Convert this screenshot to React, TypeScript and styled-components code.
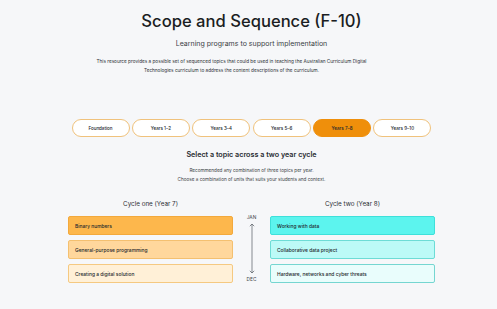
import styled, { createGlobalStyle } from "styled-components";

const GlobalStyle = createGlobalStyle`
  html, body {
    margin: 0;
    padding: 0;
    background: #f6f7f9;
    font-family: Inter, "Noto Sans", sans-serif;
    color: #1b1e23;
  }
`;

const years = ["Foundation", "Years 1–2", "Years 3–4", "Years 5–6", "Years 7–8", "Years 9–10"];

const cycleOne = ["Binary numbers", "General-purpose programming", "Creating a digital solution"];
const cycleTwo = ["Working with data", "Collaborative data project", "Hardware, networks and cyber threats"];

const orange = [
  { bg: "#fdb74c", border: "#f3a93c" },
  { bg: "#ffd79c", border: "#f4c070" },
  { bg: "#fff0d7", border: "#f5c981" },
];

const cyan = [
  { bg: "#5cf4ee", border: "#3ee0da" },
  { bg: "#bcfaf7", border: "#6ddcd6" },
  { bg: "#e9fdfc", border: "#75d6d1" },
];

const App = () => {
  return (
    <>
      <GlobalStyle />
      <Page>
        <Title>Scope and Sequence (F-10)</Title>
        <Subtitle>Learning programs to support implementation</Subtitle>
        <Intro>
          This resource provides a possible set of sequenced topics that could be used in teaching the Australian
          Curriculum Digital Technologies curriculum to address the content descriptions of the curriculum.
        </Intro>

        <Tabs>
          {years.map((y) => (
            <Tab key={y} $active={y === "Years 7–8"}>
              {y}
            </Tab>
          ))}
        </Tabs>

        <Heading>Select a topic across a two year cycle</Heading>
        <Note>
          Recommended any combination of three topics per year.
          <br />
          Choose a combination of units that suits your students and context.
        </Note>

        <Cycles>
          <Column>
            <CycleTitle>Cycle one (Year 7)</CycleTitle>
            {cycleOne.map((t, i) => (
              <Card key={t} $bg={orange[i].bg} $border={orange[i].border}>
                {t}
              </Card>
            ))}
          </Column>

          <Timeline>
            <Month>JAN</Month>
            <svg width="8" height="51" viewBox="0 0 8 51">
              <path d="M4 1 V50 M1.8 3.2 L4 1 L6.2 3.2 M1.8 47.8 L4 50 L6.2 47.8" stroke="#555a61" strokeWidth="0.7" fill="none" />
            </svg>
            <Month>DEC</Month>
          </Timeline>

          <Column>
            <CycleTitle>Cycle two (Year 8)</CycleTitle>
            {cycleTwo.map((t, i) => (
              <Card key={t} $bg={cyan[i].bg} $border={cyan[i].border}>
                {t}
              </Card>
            ))}
          </Column>
        </Cycles>
      </Page>
    </>
  );
};

const Page = styled.main`
  width: 497px;
  height: 309px;
  display: flex;
  flex-direction: column;
  align-items: center;
  padding: 11px 0 0 6px;
  box-sizing: border-box;
`;

const Title = styled.h1`
  margin: 0;
  font-size: 16.6px;
  line-height: 20px;
  font-weight: 500;
`;

const Subtitle = styled.p`
  margin: 7.5px 0 0;
  font-size: 7px;
  line-height: 10px;
  color: #3a3e44;
`;

const Intro = styled.p`
  margin: 8.5px 40px 0 0;
  width: 272px;
  font-size: 4.7px;
  line-height: 9px;
  text-align: center;
  color: #2b2f35;
`;

const Tabs = styled.nav`
  margin-top: 44px;
  width: 360px;
  display: flex;
  justify-content: space-between;
`;

const Tab = styled.div<{ $active?: boolean }>`
  width: 58px;
  height: 18px;
  box-sizing: border-box;
  border-radius: 9px;
  border: 1px solid ${(p) => (p.$active ? "#ef8f0b" : "#f0c27c")};
  background: ${(p) => (p.$active ? "#ef8f0b" : "#ffffff")};
  display: flex;
  align-items: center;
  justify-content: center;
  font-size: 4.5px;
  font-weight: 500;
  color: #22262b;
`;

const Heading = styled.h2`
  margin: 13px 0 0;
  font-size: 7.2px;
  line-height: 10px;
  font-weight: 600;
  color: #2a2d32;
`;

const Note = styled.p`
  margin: 5.5px 0 0;
  font-size: 4.65px;
  line-height: 9px;
  text-align: center;
  color: #3a3e44;
`;

const Cycles = styled.section`
  margin-top: 16px;
  width: 367px;
  display: flex;
  justify-content: space-between;
`;

const Column = styled.div`
  width: 165px;
  display: flex;
  flex-direction: column;
  gap: 5px;
`;

const CycleTitle = styled.h3`
  margin: 0 0 2.5px;
  font-size: 6.3px;
  line-height: 9px;
  font-weight: 400;
  text-align: center;
  color: #2a2d32;
`;

const Card = styled.div<{ $bg: string; $border: string }>`
  height: 19px;
  box-sizing: border-box;
  border-radius: 2px;
  border: 1px solid ${(p) => p.$border};
  background: ${(p) => p.$bg};
  display: flex;
  align-items: center;
  padding-left: 6px;
  font-size: 4.9px;
  font-weight: 500;
  color: #23272c;
`;

const Timeline = styled.div`
  width: 37px;
  padding-top: 14px;
  display: flex;
  flex-direction: column;
  align-items: center;
  gap: 2px;
`;

const Month = styled.span`
  font-size: 4.8px;
  line-height: 7px;
  color: #3a3e44;
`;

export default App;
